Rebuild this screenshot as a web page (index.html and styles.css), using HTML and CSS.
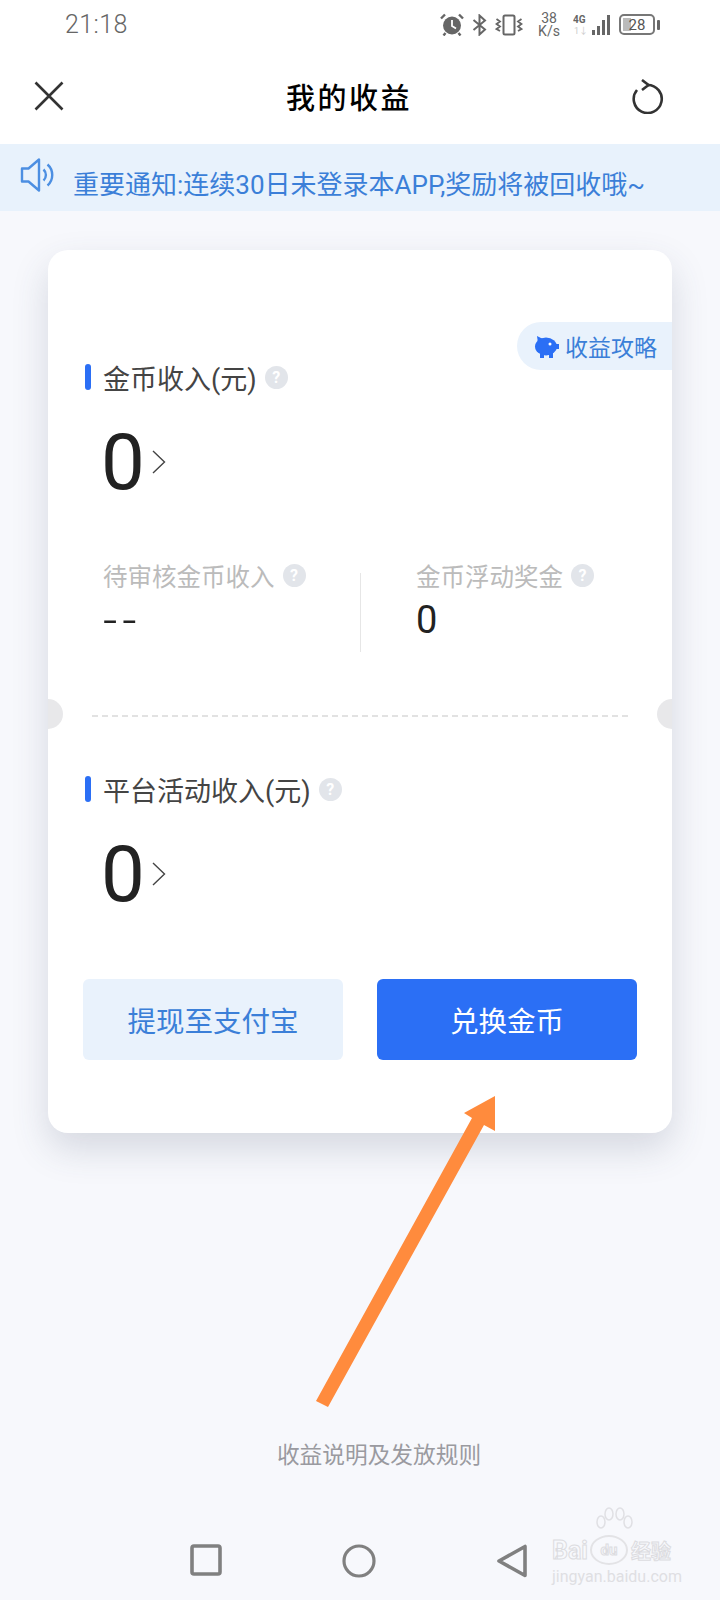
FILE: index.html
```html
<!DOCTYPE html>
<html lang="zh-CN">
<head>
    <meta charset="UTF-8">
    <meta name="viewport" content="width=device-width, initial-scale=1.0">
    <title>我的收益</title>
    <link rel="stylesheet" href="styles.css">
</head>
<body>
    <div class="page">
        <div class="status-bar">
            <span class="status-time">21:18</span>
            <div class="status-icons">
                <svg class="ic-alarm" width="24" height="23" viewBox="0 0 24 23">
                    <circle cx="12" cy="12.5" r="9" fill="#666"/>
                    <path d="M12 7v6l4 2.5" fill="none" stroke="#fff" stroke-width="1.8"/>
                    <path d="M1 5.5 5 1.5M23 5.5 19 1.5M5.500 20 3.500 22.500M18.500 20l2 2.500" stroke="#666" stroke-width="2.400" fill="none"/>
                </svg>
                <svg class="ic-bt" width="15" height="22" viewBox="0 0 15 22">
                    <path d="M1.500 6 13 15.500 7.500 20.500V1.500L13 6.500 1.500 16" fill="none" stroke="#666" stroke-width="2"/>
                </svg>
                <svg class="ic-vibrate" width="28" height="22" viewBox="0 0 28 22">
                    <rect x="8.500" y="1.500" width="11" height="19" rx="1.500" fill="none" stroke="#666" stroke-width="2"/>
                    <path d="M1.500 5 5 7.500 1.500 10 5 12.500 1.500 15 5 17M26.500 5 23 7.500 26.500 10 23 12.500 26.500 15 23 17" fill="none" stroke="#666" stroke-width="1.800"/>
                </svg>
                <div class="net-speed">
                    <span>38</span>
                    <span>K/s</span>
                </div>
                <svg class="ic-signal" width="37" height="22" viewBox="0 0 37 22">
                    <rect x="19" y="16" width="3" height="5" fill="#666"/>
                    <rect x="24" y="12" width="3" height="9" fill="#666"/>
                    <rect x="29" y="6" width="3" height="15" fill="#666"/>
                    <rect x="34" y="1" width="3" height="20" fill="#666"/>
                    <text x="0" y="9" class="sig-4g">4G</text>
                    <text x="1" y="20" class="sig-1">1↓</text>
                </svg>
                <div class="battery">
                    <div class="battery-body">
                        <span class="battery-fill"></span>
                        <span class="battery-num">28</span>
                    </div>
                    <span class="battery-nub"></span>
                </div>
            </div>
        </div>

        <div class="app-header">
            <svg width="30" height="30" viewBox="0 0 30 30">
                <path d="M1.500 1.500 28.500 28.500M28.500 1.500 1.500 28.500" stroke="#333" stroke-width="2.600" fill="none"/>
            </svg>
            <h1>我的收益</h1>
            <svg class="ic-refresh" width="32" height="35" viewBox="0 0 32 35">
                <path d="M5 11A14 14 0 1 0 15.500 6" fill="none" stroke="#333" stroke-width="2.600"/>
                <path d="M10 1 16.500 6 10 11" fill="none" stroke="#333" stroke-width="2.600"/>
            </svg>
        </div>

        <div class="notice">
            <svg class="notice-icon" width="34" height="36" viewBox="0 0 34 36">
                <path d="M2 11.500h6.500L19 2.500v31l-10.500-9H2z" fill="none" stroke="#4c8fe2" stroke-width="2.400" stroke-linejoin="round"/>
                <path d="M23.500 12.500a7.500 7.500 0 0 1 0 11M27.500 7.500a14 14 0 0 1 0 21" fill="none" stroke="#4c8fe2" stroke-width="2.400"/>
            </svg>
            <span class="notice-text">重要通知:连续30日未登录本APP,奖励将被回收哦~</span>
        </div>

        <div class="content">
            <div class="card">
                <div class="guide-pill">
                    <svg width="25" height="23" viewBox="0 0 25 23">
                        <ellipse cx="12" cy="11.500" rx="11" ry="9" fill="#2b6ff5"/>
                        <path d="M3 1l6 3-5 4zM6 17h4v6H6zM15 17h4v6h-4zM22 9h3v5h-3z" fill="#2b6ff5"/>
                        <circle cx="16" cy="9" r="1.500" fill="#fff"/>
                    </svg>
                    <span>收益攻略</span>
                </div>

                <div class="section section-coin">
                    <div class="section-title">
                        <span class="title-bar"></span>
                        <span>金币收入(元)</span>
                        <span class="help">?</span>
                    </div>
                    <div class="amount">
                        <span class="amount-num">0</span>
                        <svg width="14" height="24" viewBox="0 0 14 24">
                            <path d="M1 1l11.500 11L1 23" fill="none" stroke="#444" stroke-width="1.400"/>
                        </svg>
                    </div>
                </div>

                <div class="sub-row">
                    <div class="sub-col">
                        <div class="sub-label">待审核金币收入<span class="help">?</span></div>
                        <div class="sub-dash">--</div>
                    </div>
                    <div class="sub-col sub-col-right">
                        <div class="sub-label">金币浮动奖金<span class="help">?</span></div>
                        <div class="sub-value">0</div>
                    </div>
                </div>

                <div class="ticket-line">
                    <span class="notch notch-left"></span>
                    <span class="notch notch-right"></span>
                </div>

                <div class="section section-platform">
                    <div class="section-title">
                        <span class="title-bar"></span>
                        <span>平台活动收入(元)</span>
                        <span class="help">?</span>
                    </div>
                    <div class="amount">
                        <span class="amount-num">0</span>
                        <svg width="14" height="24" viewBox="0 0 14 24">
                            <path d="M1 1l11.500 11L1 23" fill="none" stroke="#444" stroke-width="1.400"/>
                        </svg>
                    </div>
                </div>

                <div class="actions">
                    <button class="btn btn-light">提现至支付宝</button>
                    <button class="btn btn-primary">兑换金币</button>
                </div>
            </div>

            <div class="rules">收益说明及发放规则</div>
        </div>

        <div class="nav-bar">
            <svg width="32" height="32" viewBox="0 0 32 32">
                <rect x="2" y="2" width="28" height="28" rx="2" fill="none" stroke="#808080" stroke-width="3.600"/>
            </svg>
            <svg width="34" height="34" viewBox="0 0 34 34">
                <circle cx="17" cy="17" r="15" fill="none" stroke="#808080" stroke-width="3.200"/>
            </svg>
            <svg width="32" height="34" viewBox="0 0 32 34">
                <path d="M29 2.500V31.500L3 17z" fill="none" stroke="#808080" stroke-width="3.600" stroke-linejoin="round"/>
            </svg>
        </div>

        <!-- annotation drawn on top of the screenshot -->
        <svg class="arrow" width="720" height="1600" viewBox="0 0 720 1600">
            <path d="M495 1096 464 1113 472 1118 316 1401 328 1407 484 1125 495 1131z" fill="#ff8b3d"/>
        </svg>

        <div class="watermark">
            <svg class="wm-paw" width="40" height="26" viewBox="0 0 40 26">
                <g fill="none" stroke="#e0e0e4" stroke-width="1.500">
                    <ellipse cx="7" cy="15" rx="4" ry="6"/>
                    <ellipse cx="15" cy="7" rx="4" ry="6"/>
                    <ellipse cx="26" cy="7" rx="4" ry="6"/>
                    <ellipse cx="34" cy="15" rx="4" ry="6"/>
                </g>
            </svg>
            <div class="wm-top">
                <span class="wm-bai">Bai</span>
                <span class="wm-du">du</span>
                <span class="wm-cn">经验</span>
            </div>
            <div class="wm-url">jingyan.baidu.com</div>
        </div>
    </div>
</body>
</html>
```

FILE: styles.css
```css
body {
    margin: 0;
    padding: 0;
    font-family: Roboto, "Noto Sans CJK SC", sans-serif;
    color: #222;
}

.page {
    position: relative;
    width: 720px;
    height: 1600px;
    overflow: hidden;
    display: flex;
    flex-direction: column;
    background-color: #f7f8fc;
}

/* status bar */
.status-bar {
    height: 48px;
    padding: 1px 60px 0 65px;
    box-sizing: border-box;
    display: flex;
    align-items: center;
    justify-content: space-between;
    background-color: #fff;
    color: #666;
}

.status-time {
    font-size: 25px;
    font-weight: 300;
    letter-spacing: 0.4px;
}

.status-icons {
    display: flex;
    align-items: center;
}

.ic-bt {
    margin-left: 8px;
}

.ic-vibrate {
    margin-left: 8px;
}

.net-speed {
    margin-left: 14px;
    width: 24px;
    display: flex;
    flex-direction: column;
    align-items: center;
    font-size: 14px;
    line-height: 13px;
}

.ic-signal {
    margin-left: 12px;
}

.sig-4g {
    font-size: 10px;
    font-weight: 700;
    fill: #666;
}

.sig-1 {
    font-size: 9px;
    fill: #ccc;
}

.battery {
    margin-left: 9px;
    display: flex;
    align-items: center;
}

.battery-body {
    position: relative;
    width: 32px;
    height: 17px;
    border: 2px solid #777;
    border-radius: 5px;
    display: flex;
    align-items: center;
    justify-content: center;
}

.battery-fill {
    position: absolute;
    left: 2px;
    top: 2px;
    bottom: 2px;
    width: 8px;
    background-color: #bbb;
}

.battery-num {
    position: relative;
    font-size: 15px;
    color: #555;
}

.battery-nub {
    width: 3px;
    height: 10px;
    margin-left: 2px;
    background-color: #666;
    border-radius: 1px;
}

/* header */
.app-header {
    height: 96px;
    padding: 0 56px 0 34px;
    display: grid;
    grid-template-columns: 1fr auto 1fr;
    align-items: center;
    background-color: #fff;
}

.ic-refresh {
    justify-self: end;
}

.app-header h1 {
    margin: 0;
    font-size: 29px;
    font-weight: 500;
    letter-spacing: 2.5px;
    color: #000;
}

/* notice */
.notice {
    height: 67px;
    padding-left: 20px;
    display: flex;
    background-color: #e8f2fc;
}

.notice-icon {
    margin-top: 13px;
}

.notice-text {
    margin: 23px 0 0 19px;
    font-size: 26px;
    line-height: 37px;
    color: #3b7fd8;
    white-space: nowrap;
}

/* card */
.content {
    flex: 1;
    display: flex;
    flex-direction: column;
    align-items: center;
}

.card {
    position: relative;
    flex: none;
    box-sizing: border-box;
    width: 624px;
    height: 883px;
    margin-top: 39px;
    overflow: hidden;
    background-color: #fff;
    border-radius: 20px;
    box-shadow: 0 16px 36px rgba(60, 70, 100, 0.18);
}

.guide-pill {
    position: absolute;
    top: 72px;
    right: 0;
    width: 155px;
    height: 48px;
    padding-left: 17px;
    box-sizing: border-box;
    display: flex;
    align-items: center;
    gap: 6px;
    background-color: #e9f2fc;
    border-radius: 24px 0 0 24px;
    font-size: 23px;
    color: #3b7fd8;
}

.section {
    padding-left: 37px;
}

.section-coin {
    padding-top: 107px;
}

.section-platform {
    padding-top: 52px;
}

.section-title {
    display: flex;
    align-items: center;
    height: 40px;
    font-size: 27px;
    color: #444;
}

.title-bar {
    width: 6px;
    height: 26px;
    margin-right: 12px;
    border-radius: 3px;
    background-color: #2b6ff5;
}

.help {
    display: inline-flex;
    align-items: center;
    justify-content: center;
    width: 23px;
    height: 23px;
    margin-left: 8px;
    border-radius: 50%;
    background-color: #e2e5ea;
    color: #fff;
    font-size: 16px;
    font-weight: 700;
}

.amount {
    display: flex;
    align-items: center;
    margin-top: 22px;
    padding-left: 16px;
    height: 88px;
}

.amount-num {
    font-size: 78px;
    line-height: 88px;
    color: #222;
}

.amount svg {
    margin: 0 0 2px 7px;
}

.sub-row {
    display: flex;
    margin-top: 51px;
    height: 100px;
}

.sub-col {
    width: 312px;
    box-sizing: border-box;
    padding-left: 55px;
}

.sub-col-right {
    padding-left: 55px;
    border-left: 1px solid #e6e6e6;
    height: 79px;
    margin-top: 15px;
}

.sub-label {
    display: flex;
    align-items: center;
    height: 34px;
    font-size: 24.500px;
    color: #bbb;
}

.sub-col-right .sub-label {
    margin-top: -15px;
}

.sub-dash {
    margin-top: 6px;
    font-size: 50px;
    font-weight: 300;
    line-height: 44px;
    letter-spacing: 5px;
    color: #222;
}

.sub-value {
    margin-top: 6px;
    font-size: 38px;
    line-height: 44px;
    color: #222;
}

.ticket-line {
    margin: 57px 44px 0;
    border-top: 2px dashed #e2e2e2;
}

.notch {
    position: absolute;
    top: 449px;
    width: 30px;
    height: 30px;
    border-radius: 50%;
    background-color: #e8e8ea;
}

.notch-left {
    left: -15px;
}

.notch-right {
    right: -15px;
}

.actions {
    display: flex;
    justify-content: space-between;
    margin-top: 60px;
    padding: 0 35px;
}

.btn {
    width: 260px;
    height: 81px;
    border: 0;
    border-radius: 6px;
    font-family: inherit;
    font-size: 28.500px;
}

.btn-light {
    background-color: #e9f2fc;
    color: #3b7fd8;
}

.btn-primary {
    background-color: #2b6ff5;
    color: #fff;
}

.rules {
    margin-top: 306px;
    margin-left: 38px;
    font-size: 22.700px;
    line-height: 34px;
    color: #9a9aa0;
}

/* nav bar */
.nav-bar {
    height: 56px;
    padding: 0 192px 0 190px;
    display: flex;
    align-items: flex-start;
    justify-content: space-between;
}

/* overlays */
.arrow {
    position: absolute;
    left: 0;
    top: 0;
    pointer-events: none;
}

.watermark {
    position: absolute;
    left: 552px;
    top: 1507px;
    width: 132px;
    color: #dfdfe3;
}

.wm-paw {
    display: block;
    margin-left: 42px;
}

.wm-top {
    display: flex;
    align-items: center;
    height: 34px;
    font-weight: 700;
    font-size: 25px;
    color: transparent;
    -webkit-text-stroke: 1px #dcdce0;
}

.wm-du {
    margin-left: 2px;
    width: 34px;
    height: 26px;
    border: 2px solid #e3e3e6;
    border-radius: 50%;
    font-size: 15px;
    line-height: 26px;
    text-align: center;
}

.wm-cn {
    margin-left: 3px;
    font-size: 20px;
}

.wm-url {
    font-size: 16px;
    line-height: 20px;
}
```
